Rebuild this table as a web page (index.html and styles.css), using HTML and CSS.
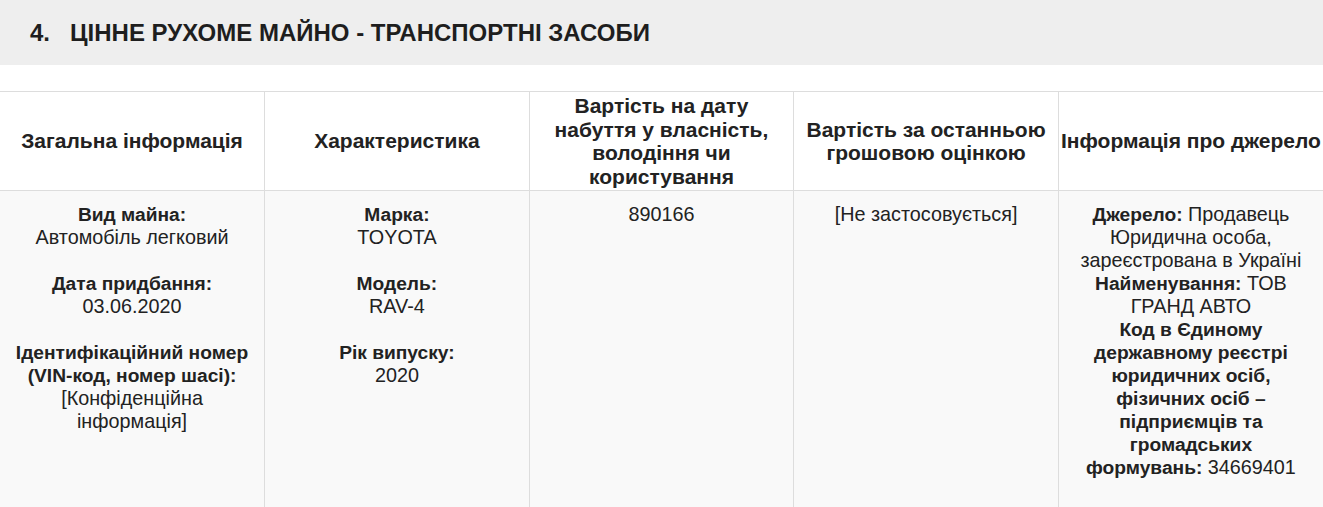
FILE: index.html
```html
<!DOCTYPE html>
<html lang="uk">
<head>
<meta charset="utf-8">
<link rel="stylesheet" href="styles.css">
</head>
<body>
<h2 class="section-title"><span class="num">4.</span>ЦІННЕ РУХОМЕ МАЙНО - ТРАНСПОРТНІ ЗАСОБИ</h2>
<table class="assets">
  <thead>
    <tr>
      <th>Загальна інформація</th>
      <th>Характеристика</th>
      <th>Вартість на дату набуття у власність, володіння чи користування</th>
      <th>Вартість за останньою грошовою оцінкою</th>
      <th>Інформація про джерело</th>
    </tr>
  </thead>
  <tbody>
    <tr>
      <td>
        <b>Вид майна:</b><br>Автомобіль легковий<br><br>
        <b>Дата придбання:</b><br>03.06.2020<br><br>
        <b>Ідентифікаційний номер (VIN-код, номер шасі):</b><br>[Конфіденційна інформація]
      </td>
      <td>
        <b>Марка:</b><br>TOYOTA<br><br>
        <b>Модель:</b><br>RAV-4<br><br>
        <b>Рік випуску:</b><br>2020
      </td>
      <td>890166</td>
      <td>[Не застосовується]</td>
      <td>
        <b>Джерело:</b> Продавець Юридична особа, зареєстрована в Україні<br>
        <b>Найменування:</b> ТОВ ГРАНД АВТО<br>
        <b>Код в Єдиному державному реєстрі юридичних осіб, фізичних осіб – підприємців та громадських формувань:</b> 34669401
      </td>
    </tr>
  </tbody>
</table>
</body>
</html>
```
FILE: styles.css
```css
html, body {
  margin: 0;
  padding: 0;
  background: #ffffff;
  color: #222222;
  font-family: "Liberation Sans", Arial, sans-serif;
}
.section-title {
  margin: 0;
  height: 65px;
  box-sizing: border-box;
  padding: 0 0 0 30px;
  display: flex;
  align-items: center;
  background: #eeeeee;
  font-size: 24px;
  font-weight: bold;
  color: #1e1e1e;
}
.section-title .num {
  margin-right: 20px;
}
.assets {
  margin-top: 26px;
  width: 100%;
  table-layout: fixed;
  border-collapse: collapse;
  font-size: 19.8px;
  line-height: 23px;
}
.assets th,
.assets td {
  border: 1px solid #dddddd;
  text-align: center;
}
.assets th {
  height: 99px;
  box-sizing: border-box;
  padding: 1px 2px;
  font-size: 21px;
  line-height: 23.5px;
  font-weight: bold;
  vertical-align: middle;
  background: #ffffff;
}
.assets th:last-child {
  white-space: nowrap;
}
.assets td {
  vertical-align: top;
  padding: 12px 14px 40px;
  background: #f9f9f9;
  height: 320px;
  box-sizing: border-box;
}
.assets td b {
  font-size: 19.2px;
}
.assets tr > :first-child { border-left: none; }
.assets tr > :last-child { border-right: none; }
```
